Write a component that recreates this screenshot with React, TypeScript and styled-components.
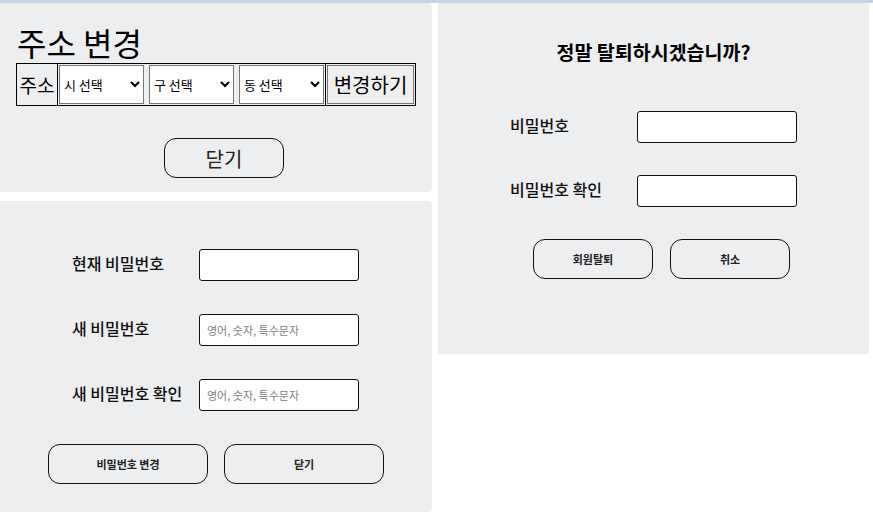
import React from "react";
import styled, { createGlobalStyle } from "styled-components";

const Global = createGlobalStyle`
  html, body { margin: 0; padding: 0; background: #ffffff; }
  body { font-family: "Noto Sans CJK KR", "Noto Sans", sans-serif; color: #000; }
`;

const Page = styled.div`
  border-top: 3px solid #c9d3e2;
  display: grid;
  grid-template-columns: 432px 431px;
  column-gap: 6px;
  align-items: start;
`;

const Column = styled.div`
  display: flex;
  flex-direction: column;
  gap: 9px;
`;

const Panel = styled.section<{ $h: number }>`
  background: #edeef0;
  border-radius: 0 4px 4px 0;
  height: ${(p) => p.$h}px;
  box-sizing: border-box;
`;

const AddressPanel = styled(Panel)`
  padding: 18px 0 0 16px;
`;

const Title = styled.h1`
  margin: 0 0 0 1px;
  font-size: 32px;
  font-weight: 400;
  line-height: 42px;
`;

const AddrTable = styled.table`
  border-collapse: collapse;
  border: 1px solid #000;
  height: 43px;
  td {
    border: 1px solid #000;
    padding: 1px;
  }
`;

const AddrLabel = styled.td`
  font-size: 19px;
  line-height: 1;
  width: 38px;
  text-align: center;
`;

const SelectGroup = styled.div`
  display: flex;
  gap: 5px;
`;

const Select = styled.select`
  width: 85px;
  height: 39px;
  font-family: "Noto Sans CJK KR", sans-serif;
  font-size: 13px;
  background: #fff;
  border: 1px solid #767676;
  border-radius: 0;
  padding: 0;
  color: #000;
`;

const ChangeButton = styled.button`
  width: 87px;
  height: 39px;
  font-family: "Noto Sans CJK KR", sans-serif;
  font-size: 20px;
  background: #efefef;
  border: 1px solid #767676;
  padding: 0;
  color: #000;
`;

const CloseRow = styled.div`
  padding: 32px 0 0 148px;
`;

const RoundButton = styled.button<{ $w: number; $size: number }>`
  width: ${(p) => p.$w}px;
  height: 40px;
  border: 1px solid #111;
  border-radius: 12px;
  background: transparent;
  font-family: "Noto Sans CJK KR", sans-serif;
  font-size: ${(p) => p.$size}px;
  font-weight: ${(p) => (p.$size < 14 ? 700 : 400)};
  color: #222;
  padding: 0;
`;

const FormPanel = styled(Panel)<{ $top: number }>`
  padding-top: ${(p) => p.$top}px;
  display: flex;
  flex-direction: column;
  gap: 33px;
`;

const FormRow = styled.div<{ $left: number }>`
  display: flex;
  align-items: center;
  padding-left: ${(p) => p.$left}px;
`;

const Label = styled.label`
  width: 127px;
  font-size: 16px;
  font-weight: 500;
  color: #111;
  margin-top: -4px;
`;

const Input = styled.input`
  width: 160px;
  height: 32px;
  box-sizing: border-box;
  border: 1px solid #111;
  border-radius: 3px;
  background: #fff;
  padding: 0 7px;
  font-family: "Noto Sans CJK KR", sans-serif;
  font-size: 11px;
  &::placeholder { color: #808080; }
`;

const ButtonRow = styled.div<{ $left: number; $gap: number }>`
  display: flex;
  gap: ${(p) => p.$gap}px;
  padding-left: ${(p) => p.$left}px;
`;

const Question = styled.h2`
  margin: 0 0 45px 0;
  text-align: center;
  font-size: 19.5px;
  font-weight: 700;
  line-height: 28px;
`;

const WithdrawPanel = styled(Panel)`
  padding-top: 35px;
  display: flex;
  flex-direction: column;
`;

const WithdrawFields = styled.div`
  display: flex;
  flex-direction: column;
  gap: 32px;
`;

export default function App() {
  return (
    <>
      <Global />
      <Page>
        <Column>
          <AddressPanel $h={189}>
            <Title>주소 변경</Title>
            <AddrTable>
              <tbody>
                <tr>
                  <AddrLabel>주소</AddrLabel>
                  <td>
                    <SelectGroup>
                      <Select defaultValue="">
                        <option value="">시 선택</option>
                      </Select>
                      <Select defaultValue="">
                        <option value="">구 선택</option>
                      </Select>
                      <Select defaultValue="">
                        <option value="">동 선택</option>
                      </Select>
                    </SelectGroup>
                  </td>
                  <td>
                    <ChangeButton>변경하기</ChangeButton>
                  </td>
                </tr>
              </tbody>
            </AddrTable>
            <CloseRow>
              <RoundButton $w={120} $size={20}>닫기</RoundButton>
            </CloseRow>
          </AddressPanel>
          <FormPanel $h={311} $top={48}>
            <FormRow $left={72}>
              <Label>현재 비밀번호</Label>
              <Input type="password" />
            </FormRow>
            <FormRow $left={72}>
              <Label>새 비밀번호</Label>
              <Input type="password" placeholder="영어, 숫자, 특수문자" />
            </FormRow>
            <FormRow $left={72}>
              <Label>새 비밀번호 확인</Label>
              <Input type="password" placeholder="영어, 숫자, 특수문자" />
            </FormRow>
            <ButtonRow $left={48} $gap={16}>
              <RoundButton $w={160} $size={11}>비밀번호 변경</RoundButton>
              <RoundButton $w={160} $size={11}>닫기</RoundButton>
            </ButtonRow>
          </FormPanel>
        </Column>
        <WithdrawPanel $h={351}>
          <Question>정말 탈퇴하시겠습니까?</Question>
          <WithdrawFields>
            <FormRow $left={72}>
              <Label>비밀번호</Label>
              <Input type="password" />
            </FormRow>
            <FormRow $left={72}>
              <Label>비밀번호 확인</Label>
              <Input type="password" />
            </FormRow>
            <ButtonRow $left={95} $gap={17}>
              <RoundButton $w={120} $size={11}>회원탈퇴</RoundButton>
              <RoundButton $w={120} $size={11}>취소</RoundButton>
            </ButtonRow>
          </WithdrawFields>
        </WithdrawPanel>
      </Page>
    </>
  );
}
